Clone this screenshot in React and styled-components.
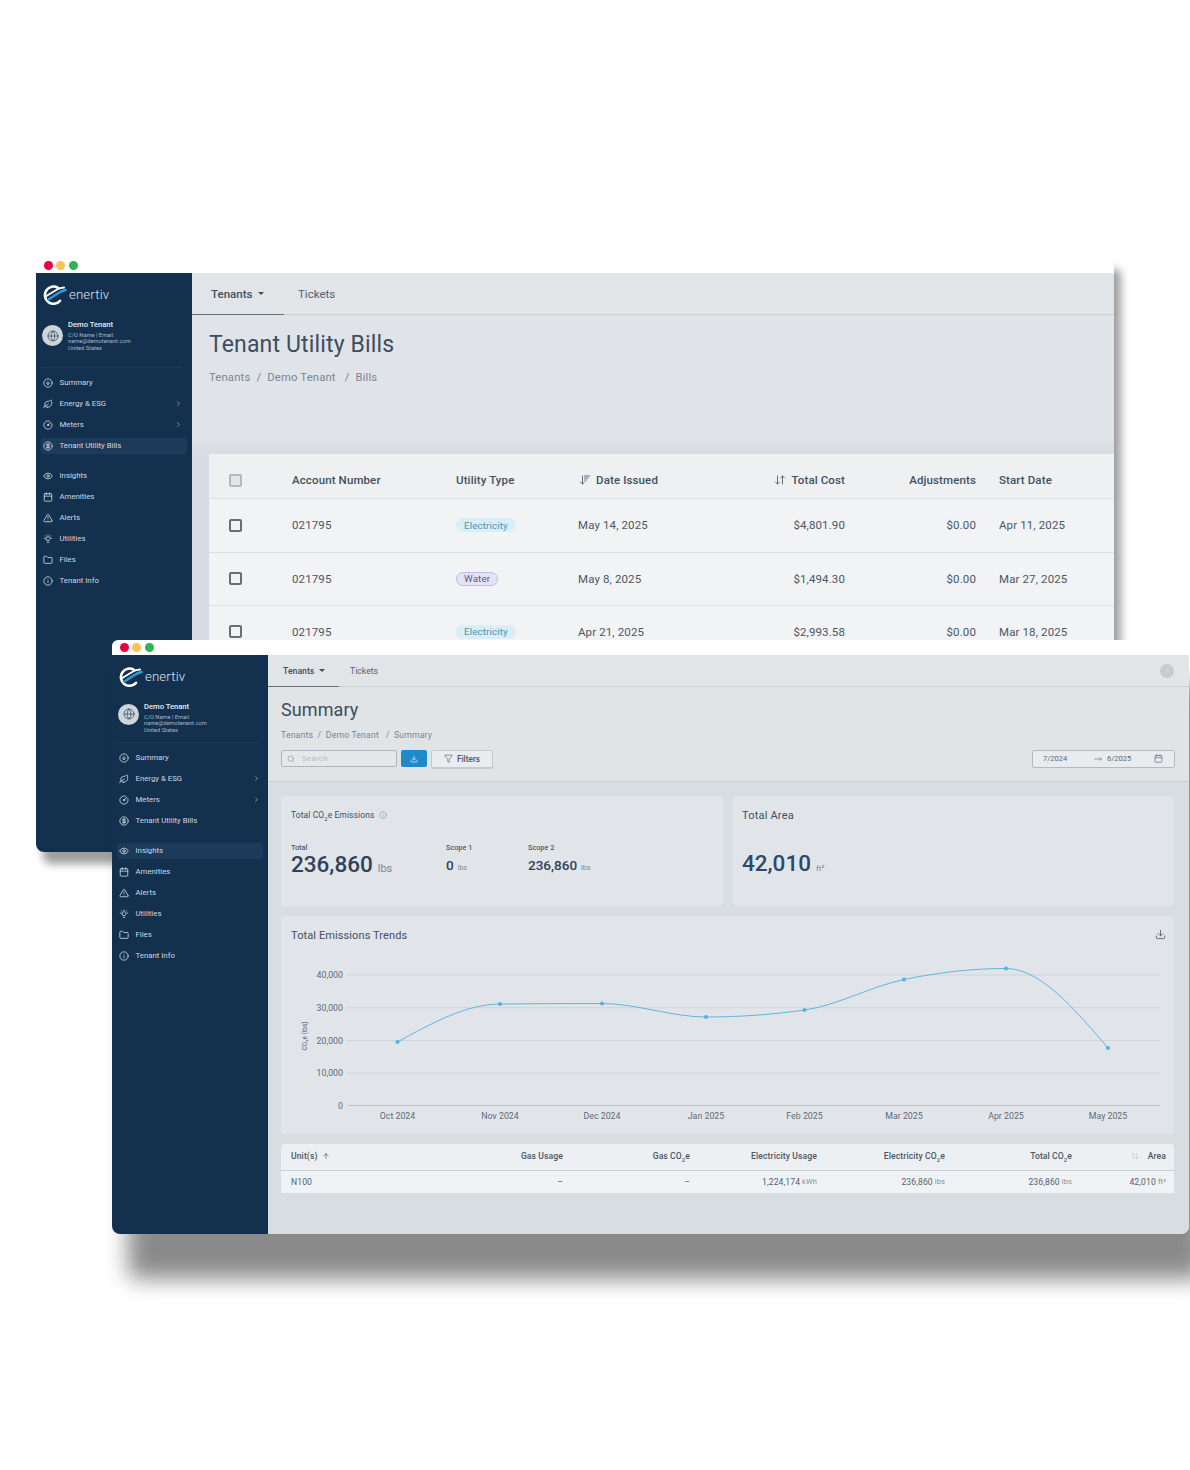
import React from 'react';
import styled, { createGlobalStyle } from 'styled-components';
import {
  ArrowDownUp,
  ArrowDownWideNarrow,
  ArrowUp,
  ArrowUpDown,
  Calendar,
  ChevronRight,
  CircleArrowDown,
  CircleDollarSign,
  CircleGauge,
  Download,
  Eye,
  Folder,
  Funnel,
  Globe,
  Info,
  Leaf,
  MoveRight,
  Search,
  TriangleAlert,
} from 'lucide-react';

const GlobalStyle = createGlobalStyle`
  html, body {
    margin: 0;
    padding: 0;
    background: #fff;
    font-family: Roboto, "Liberation Sans", sans-serif;
  }
  * { box-sizing: border-box; }
`;

const Canvas = styled.div`
  position: relative;
  width: 1190px;
  height: 1470px;
  overflow: hidden;
  background: #fff;
`;

const Window = styled.div`
  position: absolute;
  left: ${(p) => p.$left}px;
  top: ${(p) => p.$top}px;
  width: ${(p) => p.$width}px;
  height: ${(p) => p.$height}px;
  display: flex;
  flex-direction: column;
  border-radius: 6px 6px 8px 8px;
  box-shadow: ${(p) => p.$shadow};
`;

const TitleBar = styled.div`
  flex: 0 0 ${(p) => p.$height}px;
  display: flex;
  align-items: center;
  gap: 3.5px;
  padding-left: 7.5px;
  background: #fff;
  border-radius: 6px 6px 0 0;
`;

const Dot = styled.span`
  width: 9px;
  height: 9px;
  border-radius: 50%;
  background: ${(p) => p.$color};
`;

const WindowBody = styled.div`
  flex: 1;
  display: flex;
  min-height: 0;
  overflow: hidden;
  border-radius: 0 0 8px 8px;
`;

const SidebarWrap = styled.aside`
  flex: 0 0 156px;
  background: #13304f;
  color: #cdd7e0;
  padding-top: 11px;
`;

const LogoRow = styled.div`
  display: flex;
  align-items: center;
  gap: 2px;
  height: 20px;
  padding-left: 6px;
`;

const LogoText = styled.span`
  font-size: 13.2px;
  font-weight: 300;
  letter-spacing: 0.15px;
  color: #dfe6ec;
`;

const Profile = styled.div`
  display: flex;
  align-items: center;
  gap: 5px;
  margin-top: 16px;
  padding-left: 6px;
`;

const Avatar = styled.div`
  flex: 0 0 21px;
  height: 21px;
  margin-bottom: ${(p) => (p.$compact ? 7 : 0)}px;
  display: flex;
  align-items: center;
  justify-content: center;
  border-radius: 50%;
  background: #cdd4da;
  color: #3f5264;
`;

const ProfileName = styled.div`
  font-size: 7.6px;
  line-height: 9px;
  font-weight: 500;
  color: #e8edf1;
  margin-bottom: 2.5px;
`;

const ProfileLine = styled.div`
  font-size: 5.7px;
  line-height: 6.7px;
  color: #a9b7c4;
`;

const Divider = styled.div`
  height: 1px;
  margin: ${(p) => (p.$compact ? 8 : 15)}px 10px 7px 5px;
  background: #1b3a5a;
`;

const NavGroup = styled.nav`
  display: flex;
  flex-direction: column;
  gap: 5px;
  margin-top: ${(p) => p.$offset || 0}px;
`;

const NavRow = styled.div`
  display: flex;
  align-items: center;
  gap: 6.5px;
  width: 146px;
  height: 16px;
  margin-left: 5px;
  padding: 0 ${(p) => (p.$compact ? 3 : 5)}px 0 2px;
  border-radius: 2px;
  font-size: 7.8px;
  background: ${(p) => (p.$active ? '#1c3a5a' : 'transparent')};
`;

const NavLabel = styled.span`
  flex: 1;
`;

const UtilityIcon = ({ size = 10 }) => (
  <svg width={size} height={size} viewBox="0 0 24 24" fill="none" stroke="currentColor" strokeWidth="2" strokeLinecap="round">
    <path d="M8 13a4.500 4.500 0 1 1 8 0c-.7 1-1.400 1.600-1.500 3h-5c-.1-1.400-.8-2-1.500-3Z" />
    <path d="M10 20h4M12 2v1.500M3 10h2.500M18.500 10H21M5.500 4l1.500 1.500M18.500 4 17 5.500" />
  </svg>
);

const Logo = () => (
  <svg width="25" height="21" viewBox="0 0 25 21" fill="none">
    <path d="M16 3.800A8.600 8.600 0 1 0 18 16.800" stroke="#fff" strokeWidth="2.600" strokeLinecap="round" />
    <path d="M3.500 12.500 15 5.500Q18 3.800 22 3.500" stroke="#fff" strokeWidth="2" strokeLinecap="round" />
    <path d="M6.500 15.500 16.500 9Q19.500 7 23.500 6" stroke="#2a9ad6" strokeWidth="2.600" strokeLinecap="round" />
  </svg>
);

const navTop = [
  { label: 'Summary', Icon: CircleArrowDown },
  { label: 'Energy & ESG', Icon: Leaf, more: true },
  { label: 'Meters', Icon: CircleGauge, more: true },
  { label: 'Tenant Utility Bills', Icon: CircleDollarSign },
];

const navBottom = [
  { label: 'Insights', Icon: Eye },
  { label: 'Amenities', Icon: Calendar },
  { label: 'Alerts', Icon: TriangleAlert },
  { label: 'Utilities', Icon: UtilityIcon },
  { label: 'Files', Icon: Folder },
  { label: 'Tenant Info', Icon: Info },
];

const NavItems = ({ items, active, compact }) =>
  items.map(({ label, Icon, more }) => (
    <NavRow key={label} $active={label === active} $compact={compact}>
      <Icon size={10} strokeWidth={2} />
      <NavLabel>{label}</NavLabel>
      {more && <ChevronRight size={7} strokeWidth={2} />}
    </NavRow>
  ));

const Sidebar = ({ active, compact }) => (
  <SidebarWrap>
    <LogoRow>
      <Logo />
      <LogoText>enertiv</LogoText>
    </LogoRow>
    <Profile>
      <Avatar $compact={compact}>
        <Globe size={12} strokeWidth={1.6} />
      </Avatar>
      <div>
        <ProfileName>Demo Tenant</ProfileName>
        <ProfileLine>C/O Name | Email:</ProfileLine>
        <ProfileLine>name@demotenant.com</ProfileLine>
        <ProfileLine>United States</ProfileLine>
      </div>
    </Profile>
    <Divider $compact={compact} />
    <NavGroup>
      <NavItems items={navTop} active={active} compact={compact} />
    </NavGroup>
    <NavGroup $offset={14}>
      <NavItems items={navBottom} active={active} compact={compact} />
    </NavGroup>
  </SidebarWrap>
);

const Main = styled.main`
  flex: 1;
  min-width: 0;
  display: flex;
  flex-direction: column;
  background: #d7dde1;
`;

const TabBar = styled.div`
  flex: 0 0 ${(p) => p.$height}px;
  display: flex;
  align-items: stretch;
  background: #e1e5e8;
  border-bottom: 1px solid #c9cfd4;
`;

const Tab = styled.div`
  width: ${(p) => p.$width}px;
  display: flex;
  align-items: center;
  gap: ${(p) => p.$size * 0.5}px;
  padding-left: ${(p) => p.$pad}px;
  margin-bottom: -1px;
  font-size: ${(p) => p.$size}px;
  font-weight: ${(p) => (p.$active ? 500 : 400)};
  color: ${(p) => (p.$active ? '#3f5064' : '#55626f')};
  border-bottom: 1.5px solid ${(p) => (p.$active ? '#64717e' : 'transparent')};
`;

const Caret = styled.span`
  width: 0;
  height: 0;
  border-left: ${(p) => p.$size}px solid transparent;
  border-right: ${(p) => p.$size}px solid transparent;
  border-top: ${(p) => p.$size}px solid #3f5064;
`;

const Crumbs = styled.div`
  display: flex;
  align-items: center;
  gap: ${(p) => p.$gap}px;
  font-size: ${(p) => p.$size}px;
  line-height: ${(p) => p.$size + 2}px;
  color: #7b8692;
  letter-spacing: 0.15px;
`;

/* back window: Tenant Utility Bills */

const BillsHeader = styled.div`
  flex: 0 0 123px;
  padding: 16px 0 0 17px;
  background: #e0e4e8;
`;

const BillsTitle = styled.h1`
  margin: 0 0 12px;
  font-size: 23px;
  line-height: 28px;
  font-weight: 400;
  letter-spacing: 0.15px;
  color: #3c4d60;
`;

const BillsBody = styled.div`
  flex: 1;
  padding: 16px 0 0 17px;
  background: linear-gradient(#e0e4e8, #d6dce1 16px);
`;

const BillsTable = styled.div`
  background: #f1f3f5;
  font-size: 11.5px;
  letter-spacing: 0.12px;
  color: #4c5763;
`;

const BillsRow = styled.div`
  display: grid;
  grid-template-columns: 83px 164px 122px 120px 147px 131px 1fr;
  align-items: center;
  height: ${(p) => p.$height}px;
  padding: ${(p) => (p.$head ? '8px 0 0' : '0 0 1px')};
  background: ${(p) => (p.$head ? '#eef0f2' : 'transparent')};
  font-weight: ${(p) => (p.$head ? 500 : 400)};
  color: ${(p) => (p.$head ? '#3f5165' : 'inherit')};
  border-bottom: 1px solid #dde1e5;
`;

const Cell = styled.div`
  display: flex;
  align-items: center;
  gap: ${(p) => p.$gap || 0}px;
  justify-content: ${(p) => (p.$right ? 'flex-end' : 'flex-start')};
  padding-left: ${(p) => p.$pad || 0}px;
`;

const Checkbox = styled.span`
  width: 13px;
  height: 13px;
  border-radius: 2px;
  border: 2px solid ${(p) => (p.$muted ? '#b4b8bc' : '#6a6e73')};
  background: ${(p) => (p.$muted ? '#e3e5e8' : 'transparent')};
`;

const Chip = styled.span`
  display: inline-flex;
  align-items: center;
  height: 14px;
  padding: 0 7px;
  border-radius: 7px;
  font-size: 9.8px;
  background: ${(p) => (p.$water ? '#e5e4f5' : '#d9eef6')};
  color: ${(p) => (p.$water ? '#5c5a8a' : '#4b96b6')};
  border: 1px solid ${(p) => (p.$water ? '#bfbae6' : '#d9eef6')};
`;

const bills = [
  { date: 'May 14, 2025', total: '$4,801.90', start: 'Apr 11, 2025', type: 'Electricity', height: 54 },
  { date: 'May 8, 2025', total: '$1,494.30', start: 'Mar 27, 2025', type: 'Water', height: 53 },
  { date: 'Apr 21, 2025', total: '$2,993.58', start: 'Mar 18, 2025', type: 'Electricity', height: 53 },
];

const BillsScreen = () => (
  <Main>
    <TabBar $height={42}>
      <Tab $active $width={92} $pad={19} $size={11.5}>
        Tenants <Caret $size={3} />
      </Tab>
      <Tab $width={80} $pad={14} $size={11.5}>Tickets</Tab>
    </TabBar>
    <BillsHeader>
      <BillsTitle>Tenant Utility Bills</BillsTitle>
      <Crumbs $size={11.3} $gap={6}>
        <span>Tenants</span><span>/</span><span>Demo Tenant</span><span>&nbsp;/</span><span>Bills</span>
      </Crumbs>
    </BillsHeader>
    <BillsBody>
      <BillsTable>
        <BillsRow $head $height={45}>
          <Cell $pad={20}><Checkbox $muted /></Cell>
          <Cell>Account Number</Cell>
          <Cell>Utility Type</Cell>
          <Cell $pad={1} $gap={5}><ArrowDownWideNarrow size={12} strokeWidth={1.6} />Date Issued</Cell>
          <Cell $right $gap={5}><ArrowDownUp size={12} strokeWidth={1.6} />Total Cost</Cell>
          <Cell $right>Adjustments</Cell>
          <Cell $pad={23}>Start Date</Cell>
        </BillsRow>
        {bills.map((b) => (
          <BillsRow key={b.date} $height={b.height}>
            <Cell $pad={20}><Checkbox /></Cell>
            <Cell>021795</Cell>
            <Cell><Chip $water={b.type === 'Water'}>{b.type}</Chip></Cell>
            <Cell>{b.date}</Cell>
            <Cell $right>{b.total}</Cell>
            <Cell $right>$0.00</Cell>
            <Cell $pad={23}>{b.start}</Cell>
          </BillsRow>
        ))}
      </BillsTable>
    </BillsBody>
  </Main>
);

/* front window: Summary */

const SummaryHead = styled.div`
  padding: 12px 14px 13px 13px;
  background: #e0e4e7;
  border-bottom: 1px solid #c9cfd4;
`;

const SummaryTitle = styled.h1`
  margin: 0 0 9px;
  font-size: 18px;
  line-height: 22px;
  font-weight: 400;
  letter-spacing: 0.1px;
  color: #3c4d60;
`;

const Toolbar = styled.div`
  display: flex;
  align-items: center;
  gap: 4px;
  margin-top: 9px;
  height: 18px;
`;

const SearchBox = styled.div`
  width: 116px;
  height: 17px;
  display: flex;
  align-items: center;
  gap: 7px;
  padding-left: 5px;
  border: 1px solid #aeb6bd;
  border-radius: 2px;
  background: #e5e8eb;
  color: #8e98a1;
`;

const SearchInput = styled.input`
  all: unset;
  width: 80px;
  font-size: 8px;
  letter-spacing: 0.2px;
  &::placeholder { color: #b5bcc3; }
`;

const IconButton = styled.button`
  all: unset;
  box-sizing: border-box;
  width: 26px;
  height: 17px;
  display: flex;
  align-items: center;
  justify-content: center;
  border-radius: 2px;
  background: #1f8ac9;
  color: #e8f2f8;
`;

const FilterButton = styled.button`
  all: unset;
  box-sizing: border-box;
  width: 62px;
  height: 18px;
  display: flex;
  align-items: center;
  justify-content: center;
  gap: 4px;
  border: 1px solid #c4cad0;
  border-radius: 2px;
  background: #eaedf0;
  box-shadow: 0 1px 0 #c4cad0;
  font-size: 8.3px;
  font-weight: 500;
  color: #4b5866;
`;

const DateRange = styled.div`
  margin-left: auto;
  width: 143px;
  height: 18px;
  display: grid;
  grid-template-columns: 51px 13px 1fr auto;
  align-items: center;
  padding: 0 11px 0 10px;
  border: 1px solid #b3bac1;
  border-radius: 2px;
  background: #e9ecef;
  font-size: 7.5px;
  color: #5d6874;
`;

const SummaryBody = styled.div`
  flex: 1;
  display: grid;
  grid-template-columns: 442px 441px;
  grid-template-rows: 110px 218px auto;
  align-content: start;
  gap: 10px;
  padding: 14px 15px 0 13px;
`;

const Card = styled.section`
  position: relative;
  grid-column: ${(p) => (p.$wide ? '1 / -1' : 'auto')};
  padding: 13px 9px 0 ${(p) => p.$pad || 10}px;
  border-radius: 4px;
  background: #e1e5ea;
`;

const CardTitle = styled.h2`
  margin: 0;
  display: flex;
  align-items: center;
  gap: 5px;
  font-size: ${(p) => p.$size}px;
  line-height: 13px;
  font-weight: 400;
  letter-spacing: ${(p) => p.$spacing ?? 0.2}px;
  color: #43505d;
`;

const Sub = styled.sub`
  font-size: 0.68em;
  line-height: 0;
`;

const Stats = styled.div`
  display: flex;
  margin-top: 21px;
`;

const Stat = styled.div`
  width: ${(p) => p.$width}px;
`;

const StatLabel = styled.div`
  font-size: 7.3px;
  line-height: 9px;
  font-weight: 500;
  color: #4c5966;
`;

const StatValue = styled.div`
  margin-top: ${(p) => p.$top}px;
  font-size: ${(p) => p.$size}px;
  line-height: ${(p) => p.$line}px;
  font-weight: 500;
  color: ${(p) => p.$color || '#2f4258'};
`;

const Unit = styled.span`
  margin-left: ${(p) => p.$gap}px;
  font-size: ${(p) => p.$size}px;
  font-weight: 400;
  color: #7c8791;
`;

const CornerIcon = styled.span`
  position: absolute;
  top: 13px;
  right: 8px;
  display: flex;
  color: #4a5763;
`;

const ChartSvg = styled.svg`
  display: block;
  margin: 12px 0 0 -10px;
`;

const Tick = styled.text`
  font-size: 8.8px;
  fill: #5f6a75;
`;

const AxisName = styled.text`
  font-size: 6.5px;
  fill: #56616c;
`;

const UnitTable = styled.section`
  grid-column: 1 / -1;
  border-radius: 4px 4px 0 0;
  overflow: hidden;
  font-size: 8.6px;
`;

const UnitRow = styled.div`
  display: grid;
  grid-template-columns: 136px 136px 127px 127px 128px 127px 94px;
  align-items: center;
  height: ${(p) => p.$height}px;
  padding: ${(p) => (p.$head ? '0 0 2px 10px' : '0 0 0 10px')};
  background: ${(p) => (p.$head ? '#edf0f2' : '#f0f3f5')};
  font-weight: ${(p) => (p.$head ? 500 : 400)};
  letter-spacing: 0.1px;
  color: ${(p) => (p.$head ? '#4a5667' : '#56616c')};
  border-bottom: ${(p) => (p.$head ? '1px solid #c7ced4' : '0')};
`;

const UnitCell = styled.div`
  display: flex;
  align-items: center;
  gap: ${(p) => p.$gap || 0}px;
  justify-content: ${(p) => (p.$left ? 'flex-start' : 'flex-end')};
`;

const SmallUnit = styled.span`
  margin-left: 2px;
  font-size: 7.5px;
  color: #848e98;
`;

const UserDot = styled.span`
  align-self: center;
  display: flex;
  align-items: center;
  justify-content: center;
  width: 14px;
  height: 14px;
  margin-left: auto;
  margin-right: 15px;
  border-radius: 50%;
  background: #c5cbd0;
  color: #d8dce0;
`;

const points = [
  { x: 397.5, y: 1042, label: 'Oct 2024' },
  { x: 500, y: 1004, label: 'Nov 2024' },
  { x: 602, y: 1003.5, label: 'Dec 2024' },
  { x: 706, y: 1017, label: 'Jan 2025' },
  { x: 804.5, y: 1010, label: 'Feb 2025' },
  { x: 904, y: 979.5, label: 'Mar 2025' },
  { x: 1006, y: 968.5, label: 'Apr 2025' },
  { x: 1108, y: 1048, label: 'May 2025' },
];

const grid = [
  { y: 975, label: '40,000' },
  { y: 1007.7, label: '30,000' },
  { y: 1040.5, label: '20,000' },
  { y: 1073, label: '10,000' },
  { y: 1105.5, label: '0' },
];

// monotone curve through the data points
const linePath = (pts) => {
  const slopes = pts.slice(1).map((p, i) => (p.y - pts[i].y) / (p.x - pts[i].x));
  const t = pts.map((p, i) => {
    if (i === 0 || i === pts.length - 1) return 0;
    const h0 = p.x - pts[i - 1].x;
    const h1 = pts[i + 1].x - p.x;
    const s0 = slopes[i - 1];
    const s1 = slopes[i];
    const m = (s0 * h1 + s1 * h0) / (h0 + h1);
    return (Math.sign(s0) + Math.sign(s1)) * Math.min(Math.abs(s0), Math.abs(s1), 0.5 * Math.abs(m));
  });
  const last = pts.length - 1;
  t[0] = (3 * slopes[0] - t[1]) / 2;
  t[last] = (3 * slopes[last - 1] - t[last - 1]) / 2;
  let d = `M${pts[0].x} ${pts[0].y}`;
  for (let i = 0; i < last; i++) {
    const dx = (pts[i + 1].x - pts[i].x) / 3;
    d += ` C${pts[i].x + dx} ${pts[i].y + dx * t[i]} ${pts[i + 1].x - dx} ${pts[i + 1].y - dx * t[i + 1]} ${pts[i + 1].x} ${pts[i + 1].y}`;
  }
  return d;
};

const EmissionsChart = () => (
  <ChartSvg width="893" height="178" viewBox="281 954 893 178">
    {grid.map((g) => (
      <g key={g.label}>
        <line x1="347" x2="1160" y1={g.y} y2={g.y} stroke={g.label === '0' ? '#bcc3c9' : '#d0d5da'} strokeWidth="1" />
        <Tick x="343" y={g.y + 3} textAnchor="end">{g.label}</Tick>
      </g>
    ))}
    <AxisName transform="rotate(-90 307 1036)" x="307" y="1036" textAnchor="middle">CO₂e (lbs)</AxisName>
    <path d={linePath(points)} fill="none" stroke="#62b5dc" strokeWidth="1" />
    {points.map((p) => (
      <g key={p.label}>
        <circle cx={p.x} cy={p.y} r="2" fill="#4fb4e4" />
        <Tick x={p.x} y="1119" textAnchor="middle">{p.label}</Tick>
      </g>
    ))}
  </ChartSvg>
);

const SummaryScreen = () => (
  <Main>
    <TabBar $height={32}>
      <Tab $active $width={71} $pad={15} $size={8.7}>
        Tenants <Caret $size={3} />
      </Tab>
      <Tab $width={70} $pad={11} $size={8.7}>Tickets</Tab>
      <UserDot><Download size={7} strokeWidth={2} /></UserDot>
    </TabBar>
    <SummaryHead>
      <SummaryTitle>Summary</SummaryTitle>
      <Crumbs $size={8.7} $gap={4.5}>
        <span>Tenants</span><span>/</span><span>Demo Tenant</span><span>&nbsp;/</span><span>Summary</span>
      </Crumbs>
      <Toolbar>
        <SearchBox>
          <Search size={8} strokeWidth={2} />
          <SearchInput placeholder="Search" />
        </SearchBox>
        <IconButton><Download size={8} strokeWidth={2} /></IconButton>
        <FilterButton><Funnel size={9} strokeWidth={1.6} />Filters</FilterButton>
        <DateRange>
          <span>7/2024</span>
          <MoveRight size={8} strokeWidth={1.8} />
          <span>6/2025</span>
          <Calendar size={9} strokeWidth={1.8} />
        </DateRange>
      </Toolbar>
    </SummaryHead>
    <SummaryBody>
      <Card>
        <CardTitle $size={8.5} $spacing={0.1}>
          <span>Total CO<Sub>2</Sub>e Emissions</span>
          <Info size={8} strokeWidth={1.6} color="#808b96" />
        </CardTitle>
        <Stats>
          <Stat $width={155}>
            <StatLabel>Total</StatLabel>
            <StatValue $top={0} $size={22.5} $line={24}>
              236,860<Unit $gap={5} $size={11}>lbs</Unit>
            </StatValue>
          </Stat>
          <Stat $width={82}>
            <StatLabel>Scope 1</StatLabel>
            <StatValue $top={5} $size={13.5} $line={16}>
              0<Unit $gap={4} $size={7}>lbs</Unit>
            </StatValue>
          </Stat>
          <Stat $width={120}>
            <StatLabel>Scope 2</StatLabel>
            <StatValue $top={5} $size={13.5} $line={16}>
              236,860<Unit $gap={4} $size={7}>lbs</Unit>
            </StatValue>
          </Stat>
        </Stats>
      </Card>
      <Card $pad={9}>
        <CardTitle $size={11}>Total Area</CardTitle>
        <StatValue $top={28} $size={22.5} $line={26} $color="#2a4a67">
          42,010<Unit $gap={5} $size={8}>ft²</Unit>
        </StatValue>
      </Card>
      <Card $wide>
        <CardTitle $size={11} $spacing={0.1}>Total Emissions Trends</CardTitle>
        <CornerIcon><Download size={11} strokeWidth={1.8} /></CornerIcon>
        <EmissionsChart />
      </Card>
      <UnitTable>
        <UnitRow $head $height={27}>
          <UnitCell $left $gap={4}>Unit(s) <ArrowUp size={8} strokeWidth={2} /></UnitCell>
          <UnitCell>Gas Usage</UnitCell>
          <UnitCell><span>Gas CO<Sub>2</Sub>e</span></UnitCell>
          <UnitCell>Electricity Usage</UnitCell>
          <UnitCell><span>Electricity CO<Sub>2</Sub>e</span></UnitCell>
          <UnitCell><span>Total CO<Sub>2</Sub>e</span></UnitCell>
          <UnitCell $gap={9}>
            <ArrowUpDown size={8} strokeWidth={1.4} color="#a9b1b9" />Area
          </UnitCell>
        </UnitRow>
        <UnitRow $height={22}>
          <UnitCell $left>N100</UnitCell>
          <UnitCell>–</UnitCell>
          <UnitCell>–</UnitCell>
          <UnitCell>1,224,174<SmallUnit>kWh</SmallUnit></UnitCell>
          <UnitCell>236,860<SmallUnit>lbs</SmallUnit></UnitCell>
          <UnitCell>236,860<SmallUnit>lbs</SmallUnit></UnitCell>
          <UnitCell>42,010<SmallUnit>ft²</SmallUnit></UnitCell>
        </UnitRow>
      </UnitTable>
    </SummaryBody>
  </Main>
);

const Dots = () => (
  <>
    <Dot $color="#e8003f" />
    <Dot $color="#ffc05a" />
    <Dot $color="#2fb357" />
  </>
);

const App = () => (
  <Canvas>
    <GlobalStyle />
    <Window $left={36} $top={257} $width={1078} $height={595} $shadow="7px 12px 9px rgba(0, 0, 0, 0.38)">
      <TitleBar $height={16}><Dots /></TitleBar>
      <WindowBody>
        <Sidebar active="Tenant Utility Bills" />
        <BillsScreen />
      </WindowBody>
    </Window>
    <Window $left={112} $top={640} $width={1077} $height={594} $shadow="16px 45px 22px rgba(0, 0, 0, 0.46)">
      <TitleBar $height={15}><Dots /></TitleBar>
      <WindowBody>
        <Sidebar active="Insights" compact />
        <SummaryScreen />
      </WindowBody>
    </Window>
  </Canvas>
);

export default App;
